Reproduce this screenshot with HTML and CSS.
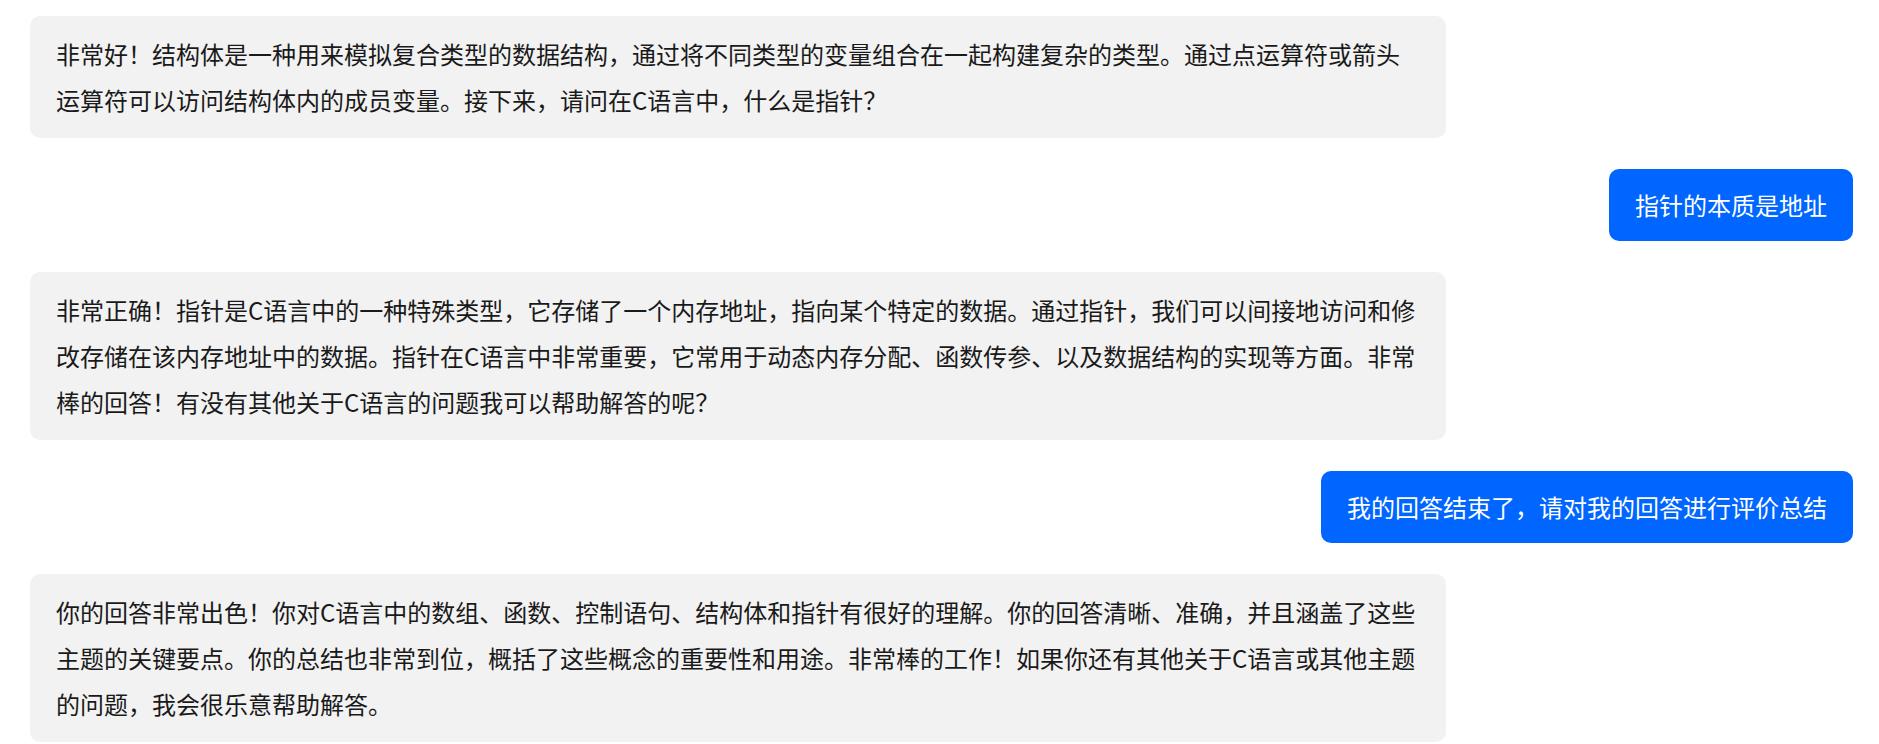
FILE: index.html
```html
<!DOCTYPE html>
<html lang="zh">
<head>
    <meta charset="UTF-8">
    <meta name="viewport" content="width=device-width, initial-scale=1.0">
    <title>C语言问答</title>
    <link rel="stylesheet" href="styles.css">
</head>
<body>

    <div class="chat">
        <div class="msg bot">非常好！结构体是一种用来模拟复合类型的数据结构，通过将不同类型的变量组合在一起构建复杂的类型。通过点运算符或箭头运算符可以访问结构体内的成员变量。接下来，请问在C语言中，什么是指针？</div>

        <div class="msg user">指针的本质是地址</div>

        <div class="msg bot">非常正确！指针是C语言中的一种特殊类型，它存储了一个内存地址，指向某个特定的数据。通过指针，我们可以间接地访问和修改存储在该内存地址中的数据。指针在C语言中非常重要，它常用于动态内存分配、函数传参、以及数据结构的实现等方面。非常棒的回答！有没有其他关于C语言的问题我可以帮助解答的呢？</div>

        <div class="msg user">我的回答结束了，请对我的回答进行评价总结</div>

        <div class="msg bot">你的回答非常出色！你对C语言中的数组、函数、控制语句、结构体和指针有很好的理解。你的回答清晰、准确，并且涵盖了这些主题的关键要点。你的总结也非常到位，概括了这些概念的重要性和用途。非常棒的工作！如果你还有其他关于C语言或其他主题的问题，我会很乐意帮助解答。</div>
    </div>

</body>
</html>
```

FILE: styles.css
```css
body { margin: 0; font-family: "Noto Sans CJK SC", "Noto Sans", sans-serif; font-size: 24px; color: #1a1a1a; background: #fff; }
.chat { display: flex; flex-direction: column; gap: 31px; padding: 16px 26px 0 30px; }
.msg { box-sizing: border-box; line-height: 46px; border-radius: 10px; }
.bot { align-self: flex-start; width: 1416px; padding: 15px 26px; background: #f2f2f2; }
.user { align-self: flex-end; padding: 13px 26px; background: #0066ff; color: #fff; }
```
